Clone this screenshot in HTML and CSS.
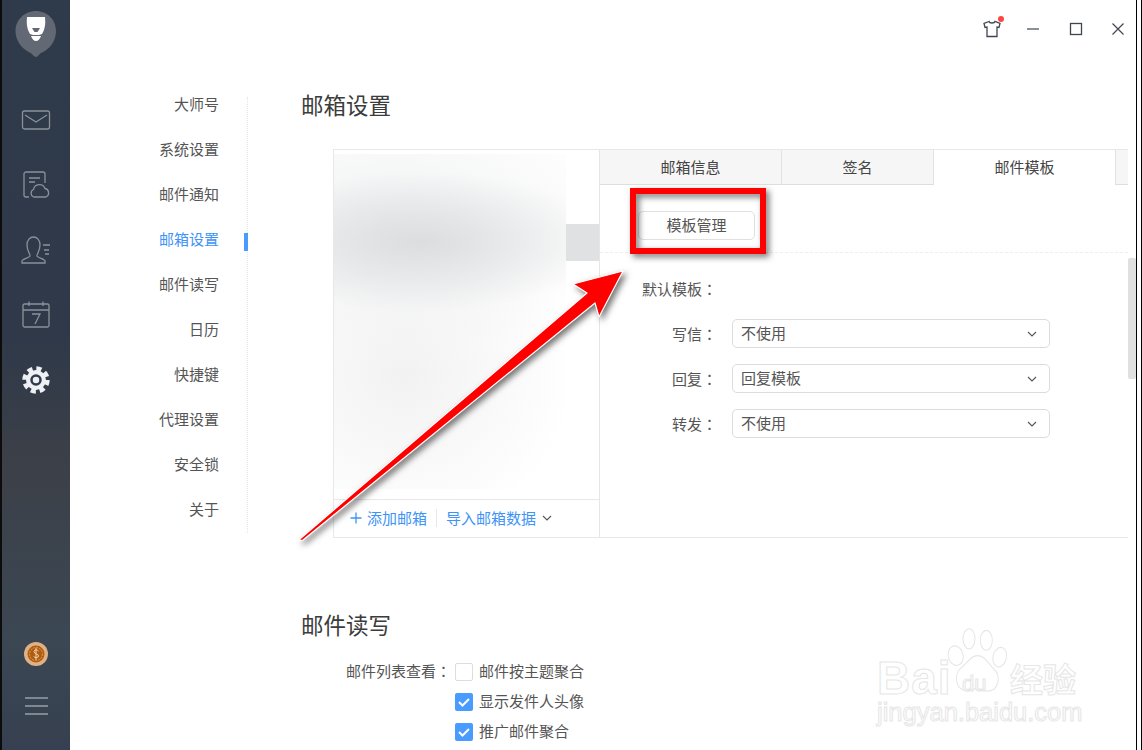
FILE: index.html
```html
<!DOCTYPE html>
<html lang="zh-CN">
<head>
  <meta charset="UTF-8" />
  <title>邮箱设置</title>
  <link rel="stylesheet" href="styles.css">
</head>
<body>
  <aside class="sidebar">
    <svg class="logo" width="42" height="48" viewBox="0 0 42 48">
      <path d="M21 1C9.500 1 .5 10 .5 21c0 10 6.500 18 15 22 2 1 3.500 4 5.500 4s3-3 5-4c8.500-3.500 15-12 15-22C41 10 32.500 1 21 1z" fill="#626974"/>
      <path d="M12 7h18c.5 6 .5 11-3 17l-3 1h-6l-3-1C11.500 18 11.500 13 12 7z" fill="#fff"/>
      <path d="M17 18h8l-2.500 4h-3z" fill="#626974"/>
      <path d="M16 26h10c-1 3-3 5-5 5s-4-2-5-5z" fill="#fff"/>
    </svg>
    <ul class="side-icons">
      <li>
        <svg width="30" height="30" viewBox="0 0 30 30" fill="none" stroke="#8a919b" stroke-width="1.300">
          <rect x="1.500" y="6" width="27" height="18" rx="2"/>
          <path d="M4 10l11 7 11-7"/>
        </svg>
      </li>
      <li>
        <svg width="30" height="30" viewBox="0 0 30 30" fill="none" stroke="#8a919b" stroke-width="1.300">
          <path d="M8 27H5a2 2 0 0 1-2-2V4a2 2 0 0 1 2-2h17a2 2 0 0 1 2 2v9"/>
          <path d="M8 8h11M8 12h6"/>
          <path d="M13 27a4 4 0 0 1-.5-7.500 6 6 0 0 1 11.500-1 4.500 4.500 0 0 1 1 8.500z"/>
        </svg>
      </li>
      <li>
        <svg width="30" height="30" viewBox="0 0 30 30" fill="none" stroke="#8a919b" stroke-width="1.300">
          <path d="M1 28v-2c0-2 7-3 8-5 .5-1.500-3-5-3-11 0-5 3-8 6.500-8S19 5 19 10c0 6-3.500 9.500-3 11 1 2 8 3 8 5v2z"/>
          <path d="M22 10h7M23 15h5M24 19h4"/>
        </svg>
      </li>
      <li>
        <svg width="30" height="30" viewBox="0 0 30 30" fill="none" stroke="#8a919b" stroke-width="1.300">
          <rect x="2" y="4" width="26" height="23" rx="1.500"/>
          <path d="M8 1.500V6M22 1.500V6M2 10h26"/>
          <path d="M11 14h8l-5 10"/>
        </svg>
      </li>
      <li>
        <svg width="30" height="30" viewBox="0 0 30 30">
          <circle cx="15" cy="15" r="10" fill="#eef0f3"/>
          <circle cx="15" cy="15" r="11.200" fill="none" stroke="#eef0f3" stroke-width="5" stroke-dasharray="5 3.800"/>
          <circle cx="15" cy="15" r="4.500" fill="#eef0f3" stroke="#2f3a4a" stroke-width="2.500"/>
        </svg>
      </li>
    </ul>
    <svg class="coin" width="24" height="24" viewBox="0 0 24 24">
      <circle cx="12" cy="12" r="12" fill="#e0b184"/>
      <circle cx="12" cy="12" r="8.500" fill="#b15d0f"/>
      <circle cx="12" cy="12" r="6.500" fill="none" stroke="#e0a873" stroke-width=".8" stroke-dasharray="2 1"/>
      <path d="M14.500 9c-1-1.500-4.500-1.500-4.500.5 0 2.500 4.500 2 4.500 4.500 0 2-3.500 2-4.800.5M12 6v12" fill="none" stroke="#f3d6b5" stroke-width="1"/>
    </svg>
    <div class="menu-lines"><span></span><span></span><span></span></div>
  </aside>

  <div class="main">
    <header class="topbar">
      <span class="skin">
        <svg width="18" height="18" viewBox="0 0 18 18" fill="none" stroke="#3f4650" stroke-width="1.300">
          <path d="M6 1.500L1 3.500l1 4 2-.500V16.500h10V7l2 .500 1-4-5-2c-.5 2-5.500 2-6 0z"/>
        </svg>
        <i class="skin-dot"></i>
      </span>
      <svg width="16" height="16" viewBox="0 0 16 16"><path d="M2 8h12" stroke="#3f4650" stroke-width="1.200"/></svg>
      <svg width="16" height="16" viewBox="0 0 16 16"><rect x="2.500" y="2.500" width="11" height="11" fill="none" stroke="#3f4650" stroke-width="1.300"/></svg>
      <svg width="16" height="16" viewBox="0 0 16 16"><path d="M2.500 2.500l11 11M13.500 2.500l-11 11" stroke="#3f4650" stroke-width="1.200"/></svg>
    </header>

    <div class="page">
      <ul class="nav">
        <li>大师号</li>
        <li>系统设置</li>
        <li>邮件通知</li>
        <li class="active">邮箱设置</li>
        <li>邮件读写</li>
        <li>日历</li>
        <li>快捷键</li>
        <li>代理设置</li>
        <li>安全锁</li>
        <li>关于</li>
      </ul>

      <div class="content">
        <h2 class="title">邮箱设置</h2>
        <div class="panel">
          <div class="accounts">
            <div class="account-list">
              <div class="blur-mask"></div>
              <div class="selected-row"></div>
            </div>
            <div class="account-foot">
              <svg width="14" height="14" viewBox="0 0 14 14"><path d="M7 1.500v11M1.500 7h11" stroke="#3d94f6" stroke-width="1.300"/></svg>
              <a class="link add-link">添加邮箱</a>
              <i class="foot-sep"></i>
              <a class="link">导入邮箱数据</a>
              <svg class="foot-arrow" width="10" height="10" viewBox="0 0 10 10"><path d="M1 3l4 4 4-4" fill="none" stroke="#555" stroke-width="1.100"/></svg>
            </div>
          </div>

          <div class="detail">
            <div class="tabs">
              <div class="tab tab-info">邮箱信息</div>
              <div class="tab tab-sign">签名</div>
              <div class="tab tab-tpl on">邮件模板</div>
              <div class="tab tab-rest"></div>
            </div>
            <div class="toolbar">
              <button class="btn">模板管理</button>
            </div>
            <div class="form">
              <div class="form-head">默认模板<span class="colon" lang="zh-Hant">：</span></div>
              <div class="form-row">
                <label>写信<span class="colon" lang="zh-Hant">：</span></label>
                <div class="select">不使用
                  <svg width="10" height="10" viewBox="0 0 10 10"><path d="M1 3l4 4 4-4" fill="none" stroke="#555" stroke-width="1.100"/></svg>
                </div>
              </div>
              <div class="form-row">
                <label>回复<span class="colon" lang="zh-Hant">：</span></label>
                <div class="select">回复模板
                  <svg width="10" height="10" viewBox="0 0 10 10"><path d="M1 3l4 4 4-4" fill="none" stroke="#555" stroke-width="1.100"/></svg>
                </div>
              </div>
              <div class="form-row">
                <label>转发<span class="colon" lang="zh-Hant">：</span></label>
                <div class="select">不使用
                  <svg width="10" height="10" viewBox="0 0 10 10"><path d="M1 3l4 4 4-4" fill="none" stroke="#555" stroke-width="1.100"/></svg>
                </div>
              </div>
            </div>
          </div>
          <div class="scrollbar"></div>
        </div>

        <h2 class="title title-read">邮件读写</h2>
        <div class="check-group">
          <div class="check-label">邮件列表查看<span class="colon" lang="zh-Hant">：</span></div>
          <div class="checks">
            <div class="check-row"><span class="box"></span>邮件按主题聚合</div>
            <div class="check-row"><span class="box checked"><svg width="18" height="18" viewBox="0 0 18 18"><path d="M4 9l3.500 3.500L14 6" fill="none" stroke="#fff" stroke-width="2"/></svg></span>显示发件人头像</div>
            <div class="check-row"><span class="box checked"><svg width="18" height="18" viewBox="0 0 18 18"><path d="M4 9l3.500 3.500L14 6" fill="none" stroke="#fff" stroke-width="2"/></svg></span>推广邮件聚合</div>
          </div>
        </div>
      </div>
    </div>
  </div>
  <div class="right-edge"></div>

  <!-- annotation drawn over the screenshot -->
  <svg class="markup" width="1142" height="750" viewBox="0 0 1142 750">
    <rect x="633" y="191" width="130" height="60" fill="none" stroke="#f00" stroke-width="6"/>
    <path d="M623 271L573 284 587 293 301 538 299 541 303 540 595 303 599 317z" fill="#f00" stroke="#fff" stroke-width="1.200" stroke-linejoin="round"/>
  </svg>

  <div class="watermark">
    <svg class="paw" width="64" height="66" viewBox="0 0 96 86" preserveAspectRatio="none" fill="#fff" stroke="#e6e6e6" stroke-width="1.500">
      <ellipse cx="16" cy="36" rx="11" ry="13" transform="rotate(-25 16 36)"/>
      <ellipse cx="36" cy="14" rx="9" ry="13"/>
      <ellipse cx="62" cy="16" rx="9" ry="13"/>
      <ellipse cx="82" cy="38" rx="10" ry="13" transform="rotate(20 82 38)"/>
      <path d="M48 36c-10 0-14 10-24 16-10 7-10 28 8 30 8 1 10-3 16-3s10 4 18 3c16-2 17-21 8-28-10-7-12-18-26-18z"/>
    </svg>
    <span class="wm-bai">Bai</span>
    <span class="wm-du">du</span>
    <span class="wm-cn">经验</span>
    <span class="wm-url">jingyan.baidu.com</span>
  </div>
</body>
</html>
```

FILE: styles.css
```css
* {
  margin: 0;
  padding: 0;
  box-sizing: border-box;
}

html, body {
  height: 100%;
}

body {
  display: flex;
  height: 750px;
  overflow: hidden;
  background: #fff;
  color: #555;
  font-family: "Noto Sans CJK SC", "Liberation Sans", sans-serif;
  font-size: 15px;
  line-height: 16px;
}

ul {
  list-style: none;
}

.colon {
  font-family: "Noto Sans CJK TC", sans-serif;
}

/* left rail */
.sidebar {
  width: 70px;
  flex: none;
  display: flex;
  flex-direction: column;
  align-items: center;
  padding-top: 10px;
  padding-bottom: 35px;
  border-left: 2px solid #0c0c0c;
  background: linear-gradient(to bottom, #2f3a4a 0%, #2f3949 45%, #3c4048 62%, #3b4753 85%, #364050 100%);
}

.side-icons {
  display: flex;
  flex-direction: column;
  gap: 35px;
  margin-top: 47px;
}

.side-icons svg {
  display: block;
}

.coin {
  margin-top: auto;
  margin-bottom: 31px;
}

.menu-lines {
  display: flex;
  flex-direction: column;
  gap: 6px;
}

.menu-lines span {
  width: 23px;
  height: 2px;
  background: #7f8790;
}

/* main column */
.main {
  flex: 1;
  min-width: 0;
  display: flex;
  flex-direction: column;
}

.right-edge {
  width: 6px;
  flex: none;
  border-left: 1px solid #000;
  border-right: 1px solid #000;
}

.topbar {
  height: 58px;
  display: flex;
  justify-content: flex-end;
  align-items: center;
  gap: 26.500px;
  padding-right: 10px;
}

.skin {
  position: relative;
  display: block;
  width: 18px;
  height: 18px;
  margin-right: -2px;
}

.skin-dot {
  position: absolute;
  top: -4px;
  right: -3px;
  width: 6px;
  height: 6px;
  border-radius: 50%;
  background: #f44;
}

.page {
  flex: 1;
  display: flex;
}

.nav {
  width: 178px;
  height: 436px;
  flex: none;
  display: flex;
  flex-direction: column;
  gap: 29px;
  margin-top: 39px;
  padding-right: 28px;
  border-right: 1px dotted #e4e4e4;
  text-align: right;
}

.nav li {
  position: relative;
  height: 16px;
  line-height: 14px;
}

.nav li.active {
  color: #3d94f6;
}

.nav li.active::after {
  content: "";
  position: absolute;
  right: -29px;
  top: 1px;
  width: 4px;
  height: 18px;
  background: #4a9bff;
}

.content {
  flex: 1;
  padding-top: 35px;
  padding-left: 54px;
}

.title {
  margin-left: -1px;
  font-size: 22.500px;
  line-height: 22px;
  font-weight: 400;
  color: #3c3c3c;
}

.title-read {
  margin-top: 75px;
}

/* account panel */
.panel {
  position: relative;
  display: flex;
  width: 795px;
  height: 389px;
  margin-top: 34px;
  margin-left: 31px;
  border-top: 1px solid #e8e8e8;
  border-left: 1px solid #e8e8e8;
  border-bottom: 1px solid #e8e8e8;
}

.accounts {
  width: 266px;
  flex: none;
  display: flex;
  flex-direction: column;
  border-right: 1px solid #e6e6e6;
}

.account-list {
  flex: 1;
  display: flex;
  align-items: flex-start;
}

.blur-mask {
  width: 232px;
  height: 335px;
  margin-top: 4px;
  flex: none;
  background:
    radial-gradient(ellipse 190px 70px at 85px 88px, #dcdddf, rgba(220, 221, 223, 0)),
    radial-gradient(ellipse 240px 130px at 60px 70px, #f0f1f2, rgba(240, 241, 242, 0)),
    radial-gradient(ellipse 170px 165px at 70px 220px, #f2f2f2, rgba(242, 242, 242, 0));
}

.selected-row {
  flex: 1;
  height: 37px;
  margin-top: 74px;
  background: #e0e1e3;
}

.account-foot {
  height: 38px;
  display: flex;
  align-items: center;
  padding-left: 15px;
  padding-bottom: 2px;
  border-top: 1px solid #e8e8e8;
}

.link {
  color: #3d94f6;
}

.add-link {
  margin-left: 4px;
}

.foot-sep {
  width: 1px;
  height: 18px;
  margin: 0 9px;
  background: #e8e8e8;
}

.foot-arrow {
  margin-left: 6px;
}

/* right half of the panel */
.detail {
  flex: 1;
  min-width: 0;
}

.tabs {
  display: flex;
  height: 35px;
}

.tab {
  display: flex;
  align-items: center;
  justify-content: center;
  padding-bottom: 1px;
  background: #f6f6f6;
  border-bottom: 1px solid #dedede;
  border-right: 1px solid #e2e2e2;
  color: #444;
}

.tab-info {
  width: 182px;
}

.tab-sign {
  width: 152px;
}

.tab-tpl {
  width: 182px;
}

.tab-rest {
  flex: 1;
  border-right: none;
}

.tab.on {
  background: #fff;
  border-bottom: none;
}

.toolbar {
  height: 68px;
  padding-top: 26px;
  padding-left: 38px;
  border-bottom: 1px dashed #eee;
}

.btn {
  display: block;
  width: 117px;
  height: 29px;
  padding-bottom: 2px;
  border: 1px solid #e0e0e0;
  border-radius: 5px;
  background: #fff;
  color: #555;
  font: inherit;
}

.form {
  padding-top: 28px;
  padding-left: 42px;
}

.form-head {
  margin-bottom: 22px;
}

.form-row {
  display: flex;
  align-items: center;
  margin-bottom: 16px;
}

.form-row label {
  width: 75px;
  margin-right: 15px;
  text-align: right;
}

.select {
  width: 318px;
  height: 29px;
  display: flex;
  align-items: center;
  justify-content: space-between;
  padding: 0 12px 2px 8px;
  border: 1px solid #dcdcdc;
  border-radius: 5px;
}

.select svg {
  margin-top: 2px;
}

.scrollbar {
  position: absolute;
  left: 794px;
  top: 108px;
  width: 8px;
  height: 121px;
  border-radius: 2px;
  background: #e0e0e0;
}

/* second section */
.check-group {
  display: flex;
  margin-top: 28px;
}

.check-label {
  width: 149px;
  margin-right: 4px;
  text-align: right;
}

.checks {
  display: flex;
  flex-direction: column;
  gap: 12px;
}

.check-row {
  display: flex;
  align-items: flex-start;
  gap: 6px;
  height: 18px;
}

.box {
  width: 18px;
  height: 18px;
  border: 1px solid #ddd;
  border-radius: 2px;
  background: #fff;
}

.box.checked {
  border: none;
  background: #4a9bff;
}

.box svg {
  display: block;
}

/* arrow and frame drawn on top */
.markup {
  position: absolute;
  left: 0;
  top: 0;
  filter: drop-shadow(3px 3px 3px rgba(0, 0, 0, 0.55));
}

.watermark {
  position: absolute;
  left: 877px;
  top: 626px;
  width: 210px;
  height: 105px;
  font-family: "Liberation Sans", sans-serif;
  color: #fff;
  -webkit-text-stroke: 1px #e6e6e6;
}

.paw {
  position: absolute;
  left: 68px;
  top: 2px;
}

.wm-bai {
  position: absolute;
  left: 0;
  top: 32px;
  font-size: 46px;
  line-height: 40px;
  font-weight: 700;
  letter-spacing: 1px;
}

.wm-du {
  position: absolute;
  left: 85px;
  top: 46px;
  font-size: 22px;
  line-height: 24px;
}

.wm-cn {
  position: absolute;
  left: 133px;
  top: 34px;
  font-family: "Noto Sans CJK SC", sans-serif;
  font-size: 33px;
  line-height: 36px;
  font-weight: 700;
}

.wm-url {
  position: absolute;
  left: 0;
  top: 73px;
  font-size: 25.500px;
  line-height: 26px;
}
```
